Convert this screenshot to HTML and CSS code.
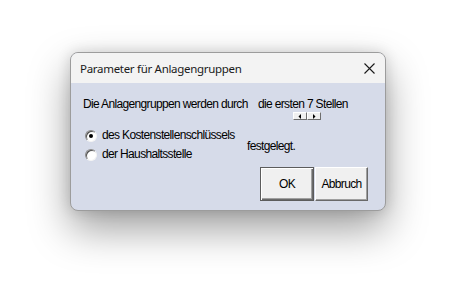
FILE: index.html
```html
<!DOCTYPE html>
<html lang="de">
<head>
<meta charset="utf-8">
<title>Parameter für Anlagengruppen</title>
<link rel="stylesheet" href="styles.css">
</head>
<body>
<div class="stage">
  <div class="dialog">
    <div class="titlebar">
      <span class="title">Parameter für Anlagengruppen</span>
      <svg class="close" width="11" height="11" viewBox="0 0 11 11"><path d="M0.5 0.5 L10.5 10.5 M10.5 0.5 L0.5 10.5" stroke="#1a1a1a" stroke-width="1.1" fill="none"/></svg>
    </div>
    <div class="content">
      <div class="row-top">
        <span class="lead">Die Anlagengruppen werden durch</span>
        <span class="value">die ersten 7 Stellen</span>
      </div>
      <div class="spinner">
        <span class="spin"><svg width="4" height="5" viewBox="0 0 4 5"><path d="M3 0 L3 5 L0.5 2.5 Z" fill="#000"/></svg></span>
        <span class="spin"><svg width="4" height="5" viewBox="0 0 4 5"><path d="M1 0 L1 5 L3.5 2.5 Z" fill="#000"/></svg></span>
      </div>
      <div class="choice">
        <div class="radios">
          <label class="radio-row"><span class="radio checked"></span><span>des Kostenstellenschlüssels</span></label>
          <label class="radio-row"><span class="radio"></span><span>der Haushaltsstelle</span></label>
        </div>
        <span class="suffix">festgelegt.</span>
      </div>
      <div class="buttons">
        <button class="btn btn-default">OK</button>
        <button class="btn">Abbruch</button>
      </div>
    </div>
  </div>
</div>
</body>
</html>
```

FILE: styles.css
```css
html, body {
  margin: 0;
  padding: 0;
  background: #ffffff;
  height: 100%;
}

.stage {
  box-sizing: border-box;
  min-height: 286px;
  height: 100%;
  padding: 52px 0 0 70px;
}

.dialog {
  width: 316px;
  height: 159px;
  box-sizing: border-box;
  border: 1px solid #9c9c9c;
  border-radius: 8px;
  overflow: hidden;
  background: #d6dbe9;
  box-shadow: 0 18px 40px rgba(0, 0, 0, 0.38), 0 0 14px rgba(0, 0, 0, 0.14);
  display: flex;
  flex-direction: column;
}

.titlebar {
  height: 30px;
  flex: none;
  background: #f3f3f3;
  display: flex;
  align-items: center;
  padding: 0 10px 0 9px;
}

.title {
  font-family: "Noto Sans", "Liberation Sans", sans-serif;
  font-size: 11.5px;
  letter-spacing: -0.3px;
  color: #1a1a1a;
}

.close {
  margin-left: auto;
  display: block;
}

.content {
  flex: 1;
  padding: 15px 17px 0 12px;
  font-family: "Liberation Sans", Arial, sans-serif;
  font-size: 12px;
  letter-spacing: -0.65px;
  line-height: 13px;
  color: #000;
}

.row-top {
  display: flex;
}

.lead {
  width: 175px;
  flex: none;
}

.spinner {
  display: flex;
  margin: 1px 0 0 210px;
  height: 8px;
}

.spin {
  width: 14px;
  height: 8px;
  box-sizing: border-box;
  background: #f0f0f0;
  border-style: solid;
  border-width: 1px;
  border-color: #ffffff #6e6e6e #6e6e6e #ffffff;
  display: flex;
  align-items: center;
  justify-content: center;
}

.spin svg {
  display: block;
}

.choice {
  display: flex;
  margin-top: 6px;
}

.radios {
  width: 164px;
  flex: none;
  display: flex;
  flex-direction: column;
}

.radio-row {
  height: 19px;
  display: flex;
  align-items: center;
}

.radio {
  width: 12px;
  height: 12px;
  box-sizing: border-box;
  margin: 0 5px 0 2px;
  border-radius: 50%;
  background: #ffffff;
  border: 1px solid;
  border-color: #8a8a8a #f4f4f4 #f4f4f4 #8a8a8a;
  box-shadow: inset 1px 1px 0 #505050;
  position: relative;
  flex: none;
}

.radio.checked::after {
  content: "";
  position: absolute;
  left: 3px;
  top: 3px;
  width: 4px;
  height: 4px;
  border-radius: 50%;
  background: #000;
}

.suffix {
  margin-top: 14px;
}

.buttons {
  display: flex;
  justify-content: flex-end;
  gap: 1px;
  margin-top: 3px;
}

.btn {
  width: 53px;
  height: 34px;
  box-sizing: border-box;
  padding: 0;
  font-family: "Liberation Sans", Arial, sans-serif;
  font-size: 12px;
  letter-spacing: -0.65px;
  color: #000;
  background: #f0f0f0;
  border: 1px solid;
  border-color: #ffffff #696969 #696969 #ffffff;
  box-shadow: inset -1px -1px 0 #a0a0a0;
  border-radius: 0;
}

.btn-default {
  width: 54px;
  border: 1px solid #5c5c5c;
  box-shadow: inset 1px 1px 0 #ffffff, inset -1px -1px 0 #6b6b6b, inset -2px -2px 0 #a0a0a0;
}
```
